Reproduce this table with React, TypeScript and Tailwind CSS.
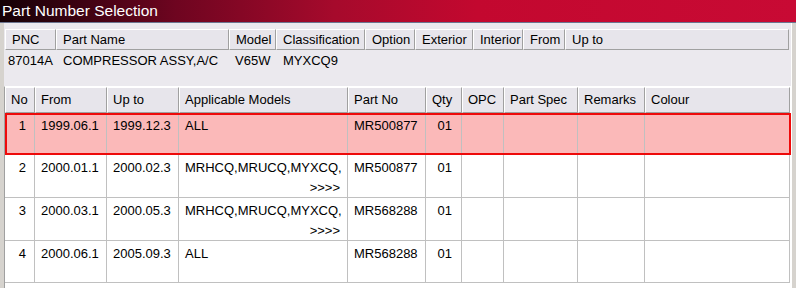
import React from 'react';

// summary strip above the list
const summaryCols = [
  { label: 'PNC', w: 'w-[51px]' },
  { label: 'Part Name', w: 'w-[173px]' },
  { label: 'Model', w: 'w-[47px]' },
  { label: 'Classification', w: 'w-[89px]' },
  { label: 'Option', w: 'w-[50px]' },
  { label: 'Exterior', w: 'w-[58px]' },
  { label: 'Interior', w: 'w-[50px]' },
  { label: 'From', w: 'w-[42px]' },
  { label: 'Up to', w: 'w-[224px]' },
];

const gridCols = 'grid grid-cols-[30px_72px_72px_169px_78px_36px_42px_74px_67px_145px]';

const headers = ['No', 'From', 'Up to', 'Applicable Models', 'Part No', 'Qty', 'OPC', 'Part Spec', 'Remarks', 'Colour'];

const rows = [
  { no: '1', from: '1999.06.1', upTo: '1999.12.3', models: 'ALL', more: false, partNo: 'MR500877', qty: '01', h: 'h-[42px]' },
  { no: '2', from: '2000.01.1', upTo: '2000.02.3', models: 'MRHCQ,MRUCQ,MYXCQ,', more: true, partNo: 'MR500877', qty: '01', h: 'h-[43px]' },
  { no: '3', from: '2000.03.1', upTo: '2000.05.3', models: 'MRHCQ,MRUCQ,MYXCQ,', more: true, partNo: 'MR568288', qty: '01', h: 'h-[43px]' },
  { no: '4', from: '2000.06.1', upTo: '2005.09.3', models: 'ALL', more: false, partNo: 'MR568288', qty: '01', h: 'h-[42px]' },
];

const bevel =
  'border-t border-l border-r border-b border-t-white border-l-white border-r-[#a0a0a0] border-b-[#a0a0a0] bg-[#e7e5eb]';

export default function App() {
  return (
    <div className="w-[796px] h-[288px] overflow-hidden bg-[#d6d3ce] text-[13px] text-black font-['Liberation_Sans',Arial,sans-serif]">
      {/* title bar */}
      <div className="h-[23px] border-b border-b-[#6b7590] bg-[linear-gradient(to_right,#140106,#6e0520_22%,#a60a2c_42%,#c3082f_60%,#c80a34)] pl-[2px] text-[15.5px] leading-[22px] text-white">
        Part Number Selection
      </div>

      <div className="ml-[4px] w-[788px] h-[265px] border-r border-r-white bg-[#ebe9ee]">
        {/* selected part summary */}
        <div className="pt-[6px] pl-[1px]">
          <div className="flex h-[21px]">
            {summaryCols.map((c) => (
              <div key={c.label} className={`${c.w} ${bevel} flex items-center pl-[6px] leading-none`}>
                {c.label}
              </div>
            ))}
          </div>
          <div className="flex h-[21px] items-center">
            <div className="w-[51px] pl-[3px]">87014A</div>
            <div className="w-[173px] pl-[7px]">COMPRESSOR ASSY,A/C</div>
            <div className="w-[47px] pl-[6px]">V65W</div>
            <div className="w-[89px] pl-[7px]">MYXCQ9</div>
          </div>
        </div>

        {/* applicable part numbers */}
        <div className="mt-[15px] h-[203px] border-t border-t-white border-l border-l-[#a0a0a0] bg-white">
          <div className={`${gridCols} h-[26px]`}>
            {headers.map((h) => (
              <div key={h} className={`${bevel} flex items-center pl-[5px] pb-[1px] leading-none`}>
                {h}
              </div>
            ))}
          </div>

          {rows.map((r, i) => (
            <div key={r.no} className={`relative ${gridCols} ${r.h} ${i === 0 ? 'bg-[#fbb9b9]' : ''}`}>
              <div className="border-r border-b border-[#c0c0c0] pr-[8px] pt-[5px] text-right leading-[16px]">{r.no}</div>
              <div className="border-r border-b border-[#c0c0c0] pl-[6px] pt-[5px] leading-[16px]">{r.from}</div>
              <div className="border-r border-b border-[#c0c0c0] pl-[6px] pt-[5px] leading-[16px]">{r.upTo}</div>
              <div className="border-r border-b border-[#c0c0c0] pl-[6px] pr-[7px] pt-[5px] leading-[16px]">
                <div>{r.models}</div>
                {r.more && <div className="mt-[4px] text-right">{'>>>>'}</div>}
              </div>
              <div className="border-r border-b border-[#c0c0c0] pl-[6px] pt-[5px] leading-[16px]">{r.partNo}</div>
              <div className="border-r border-b border-[#c0c0c0] pr-[9px] pt-[5px] text-right leading-[16px]">{r.qty}</div>
              <div className="border-r border-b border-[#c0c0c0]" />
              <div className="border-r border-b border-[#c0c0c0]" />
              <div className="border-r border-b border-[#c0c0c0]" />
              <div className="border-r border-b border-[#c0c0c0]" />
              {i === 0 && <div className="pointer-events-none absolute inset-0 border-2 border-[#ee0a0a]" />}
            </div>
          ))}
        </div>
      </div>
    </div>
  );
}
